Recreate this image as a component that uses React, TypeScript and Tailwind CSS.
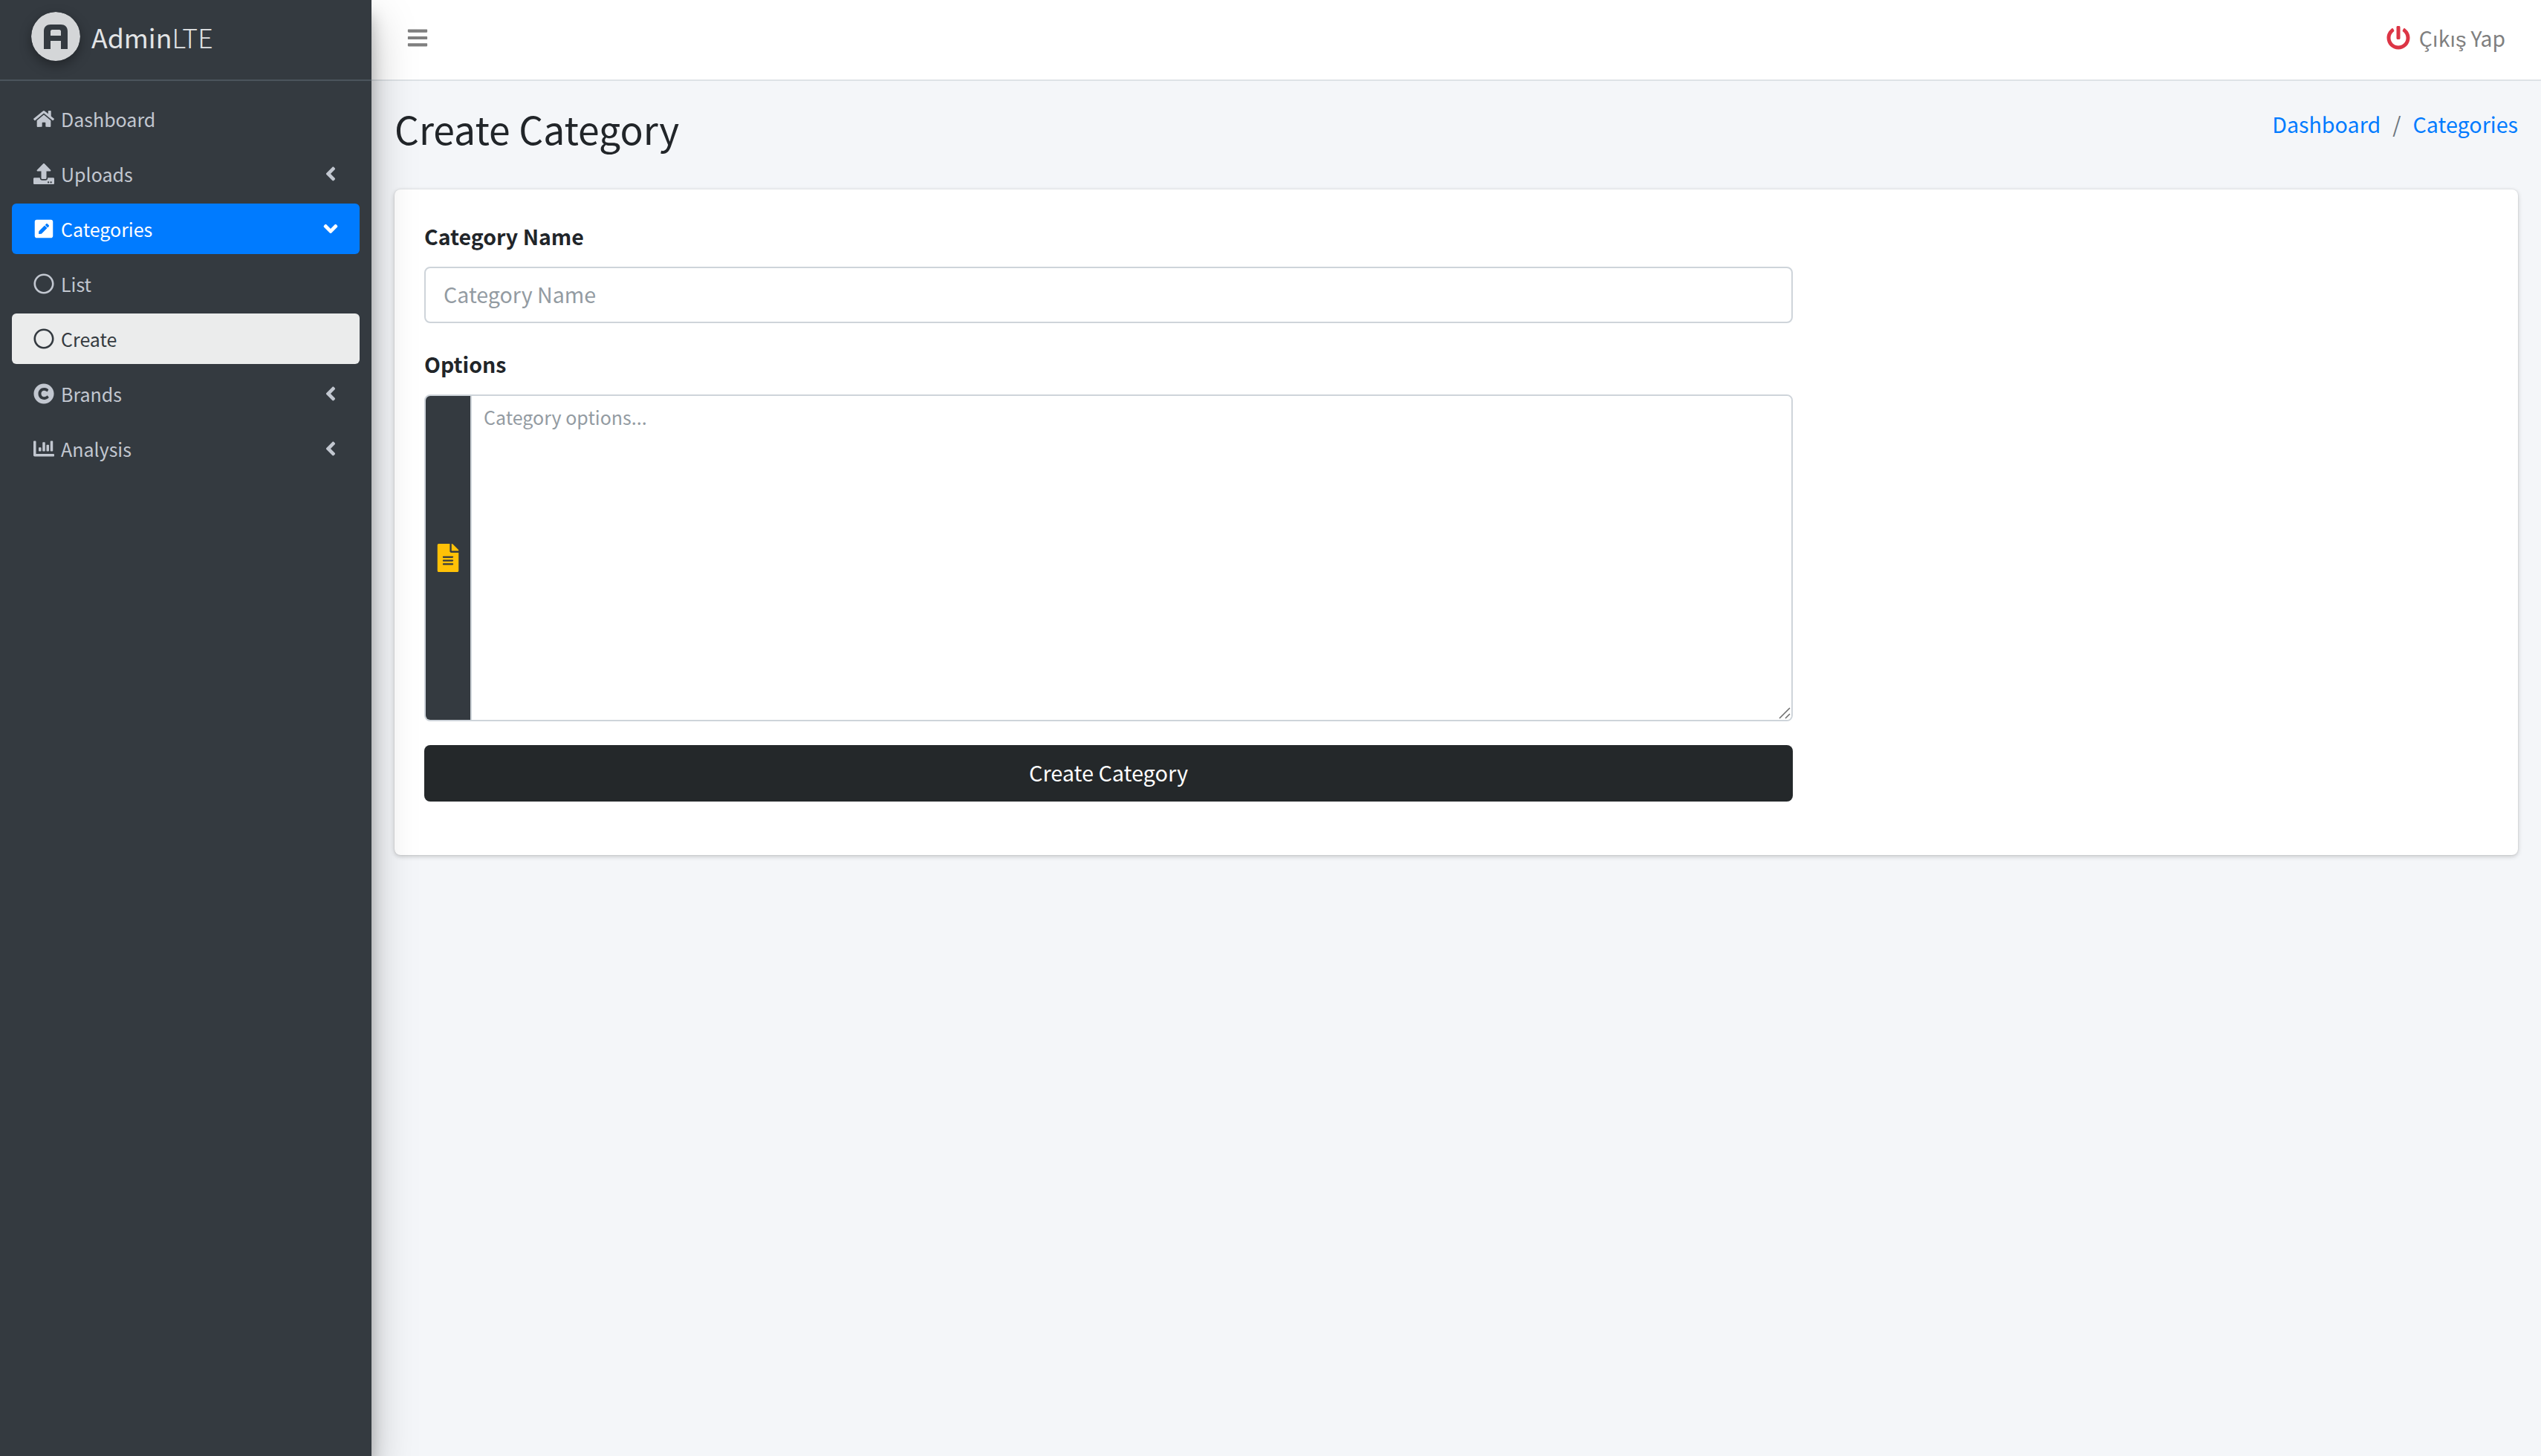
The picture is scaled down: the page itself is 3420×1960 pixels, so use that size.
import { FaAngleDown, FaAngleLeft, FaBars, FaChartBar, FaCopyright, FaFileAlt, FaHome, FaPenSquare, FaPowerOff, FaRegCircle, FaUpload } from 'react-icons/fa';
import type { ReactNode } from 'react';

const FONT = 'font-["Noto_Sans_CJK_SC","Source_Sans_Pro",sans-serif]';

function NavItem({ icon, label, arrow, state }: { icon: ReactNode; label: string; arrow?: 'left' | 'down'; state?: 'active' | 'current' }) {
  const colors =
    state === 'active'
      ? 'bg-[#007bff] text-white'
      : state === 'current'
        ? 'bg-[#ebecec] text-[#343a40]'
        : 'text-[#c2c7d0]';
  return (
    <a className={`flex h-[68px] items-center rounded-[6px] pb-[1px] pl-[29px] pr-[24px] text-[25px] leading-[64px] ${colors}`}>
      <span className="flex w-[37px] shrink-0 items-center justify-start">{icon}</span>
      <span className="flex-1">{label}</span>
      {arrow === 'left' && <FaAngleLeft className="text-[30px]" />}
      {arrow === 'down' && <FaAngleDown className="text-[30px]" />}
    </a>
  );
}

function Sidebar() {
  return (
    <aside className="relative z-10 flex w-[500px] shrink-0 flex-col bg-[#343a40] shadow-[0_28px_56px_rgba(0,0,0,0.25),0_20px_20px_rgba(0,0,0,0.22)]">
      <div className="flex h-[109px] items-center border-b-2 border-[#4b545c] pb-[10px] pl-[42px]">
        <svg viewBox="0 0 66 66" className="h-[66px] w-[66px] shrink-0 rounded-full shadow-[0_6px_16px_rgba(0,0,0,0.35)]">
          <circle cx="33" cy="33" r="33" fill="#d4d6d8" />
          <path d="M17 50V26c0-6 4-9 9-9h14c5 0 9 3 9 9v24H40V39H26v11zM26 32h14v-6c0-1-1-2-2-2H28c-1 0-2 1-2 2z" fill="#343a40" fillRule="evenodd" />
        </svg>
        <span className="ml-[15px] pt-[2px] text-[35.7px] leading-[60px] text-[#e2e4e6]">
          Admin<span className="font-light">LTE</span>
        </span>
      </div>
      <nav className="flex flex-col gap-[6px] px-[16px] pt-[17px]">
        <NavItem icon={<FaHome className="text-[28px]" />} label="Dashboard" />
        <NavItem icon={<FaUpload className="text-[28px]" />} label="Uploads" arrow="left" />
        <NavItem icon={<FaPenSquare className="text-[28px]" />} label="Categories" arrow="down" state="active" />
        <NavItem icon={<FaRegCircle className="text-[28px]" />} label="List" />
        <NavItem icon={<FaRegCircle className="text-[28px]" />} label="Create" state="current" />
        <NavItem icon={<FaCopyright className="text-[28px]" />} label="Brands" arrow="left" />
        <NavItem icon={<FaChartBar className="text-[28px]" />} label="Analysis" arrow="left" />
      </nav>
    </aside>
  );
}

function Topbar() {
  return (
    <header className="flex h-[109px] items-center justify-between border-b-2 border-[#dee2e6] bg-white pb-[5px] pl-[47px] pr-[48px]">
      <FaBars className="text-[30px] text-[#7f7f7f]" />
      <div className="flex items-center gap-[12px] text-[28.3px] leading-[48px] text-[#7f7f7f]">
        <FaPowerOff className="text-[32px] text-[#dc3545]" />
        <span>Çıkış Yap</span>
      </div>
    </header>
  );
}

function CategoryForm() {
  return (
    <form className="flex h-[896px] flex-col rounded-[8px] bg-white px-[40px] pt-[40px] shadow-[0_0_2px_rgba(0,0,0,0.125),0_2px_6px_rgba(0,0,0,0.2)]">
      <div className="w-[1842px]">
        <label className="block text-[28.5px] font-bold leading-[46px] text-[#212529]">Category Name</label>
        <input
          placeholder="Category Name"
          className="mt-[18px] block h-[76px] w-full rounded-[8px] border-2 border-[#ced4da] bg-white px-[24px] pb-[4px] text-[28.6px] text-[#495057] outline-none placeholder:text-[#939ba2]"
        />
        <label className="mt-[32px] block text-[28.5px] font-bold leading-[46px] text-[#212529]">Options</label>
        <div className="relative mt-[18px] flex h-[440px] overflow-hidden rounded-[8px] border-2 border-[#ced4da]">
          <div className="flex w-[62px] shrink-0 items-center justify-center border-r-2 border-[#ced4da] bg-[#343a40]">
            <FaFileAlt className="text-[38px] text-[#ffc107]" />
          </div>
          <textarea
            placeholder="Category options..."
            className="flex-1 resize-none bg-white px-[16px] py-[7px] text-[25px] leading-[42px] text-[#495057] outline-none placeholder:text-[#939ba2]"
          />
          <svg viewBox="0 0 16 16" className="absolute bottom-[1px] right-[1px] h-[16px] w-[16px]">
            <path d="M1 15L15 1M9 15L15 9" stroke="#6f6f6f" strokeWidth="1.6" fill="none" />
          </svg>
        </div>
        <button type="button" className="mt-[32px] block h-[76px] w-full rounded-[8px] bg-[#24282a] pb-[2px] text-[28.8px] leading-[48px] text-white">
          Create Category
        </button>
      </div>
    </form>
  );
}

export default function App() {
  return (
    <div className={`flex h-[1960px] w-[3420px] overflow-hidden bg-[#f4f6f9] ${FONT}`}>
      <Sidebar />
      <div className="flex flex-1 flex-col">
        <Topbar />
        <main className="px-[31px]">
          <div className="flex h-[146px] items-start justify-between">
            <h1 className="pt-[22px] text-[51.6px] font-normal leading-[84px] text-[#212529]">Create Category</h1>
            <div className="flex pt-[19px] text-[28.7px] leading-[78px]">
              <a className="text-[#007bff]">Dashboard</a>
              <span className="px-[16px] text-[#6c757d]">/</span>
              <a className="text-[#007bff]">Categories</a>
            </div>
          </div>
          <CategoryForm />
        </main>
      </div>
    </div>
  );
}
